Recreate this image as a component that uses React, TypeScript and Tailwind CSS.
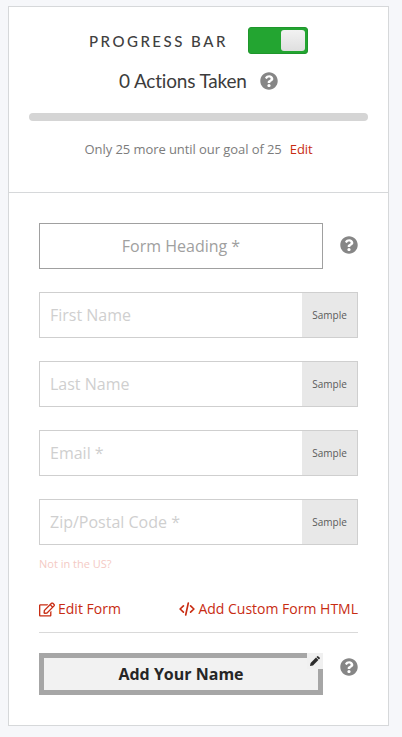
import { useState } from 'react';
import { FaQuestionCircle, FaRegEdit } from 'react-icons/fa';

interface SampleField {
  name: string;
  placeholder: string;
}

const FIELDS: SampleField[] = [
  { name: 'first_name', placeholder: 'First Name' },
  { name: 'last_name', placeholder: 'Last Name' },
  { name: 'email', placeholder: 'Email *' },
  { name: 'zip', placeholder: 'Zip/Postal Code *' },
];

function HelpIcon() {
  return <FaQuestionCircle className="h-[18px] w-[18px] shrink-0 text-[#868686]" />;
}

function CodeIcon() {
  return (
    <svg
      viewBox="0 0 16 14"
      className="h-[14px] w-4"
      fill="none"
      stroke="currentColor"
      strokeWidth="1.65"
      strokeLinecap="round"
      strokeLinejoin="round"
    >
      <path d="M4.4 3.9 1.1 7l3.3 3.1M11.6 3.9 14.9 7l-3.3 3.1M9.3 1 6.7 13" />
    </svg>
  );
}

function PencilIcon() {
  return (
    <svg viewBox="0 0 10 10" className="h-[10px] w-[10px]" fill="#2c2c2c">
      <path d="M0 10 .6 7 6 1.6 8.4 4 3 9.4Z" />
      <path d="M6.5 1.1 7.3.3Q7.8-.1 8.4.4L9.6 1.6Q10.1 2.2 9.7 2.7L8.9 3.5Z" />
    </svg>
  );
}

export default function App() {
  const [showProgress, setShowProgress] = useState(true);

  return (
    <div className="h-[737px] w-[402px] overflow-hidden bg-[#f6f7fa] pt-[6px] pl-2 font-['Open_Sans',sans-serif]">
      <div className="h-[720px] w-[381px] border border-[#d6d8da] bg-white">
        {/* Progress bar settings */}
        <div className="h-[186px] border-b border-[#d6d8da] px-5 pt-5">
          <div className="flex h-[27px] items-center pl-[60px]">
            <h2 className="w-[159px] pt-[2px] font-['Lato',sans-serif] text-[15px] leading-[27px] font-medium tracking-[2.5px] whitespace-nowrap text-[#404040]">
              PROGRESS BAR
            </h2>
            <button
              onClick={() => setShowProgress(!showProgress)}
              className={`flex h-[27px] w-[60px] items-center rounded-[3px] border px-[2px] ${showProgress ? 'justify-end border-[#1f962c] bg-[#23a531]' : 'border-gray-400 bg-gray-300'}`}
            >
              <span className="h-[21px] w-6 rounded-[3px] bg-linear-to-b from-[#f2f2f2] to-[#dfdfdf]" />
            </button>
          </div>

          <div className="mt-[13px] flex h-[27px] items-center pl-[90px]">
            <span className="w-[141px] pt-[2px] font-['Lato',sans-serif] text-[19px] tracking-[-0.18px] whitespace-nowrap text-[#3c3c3c] [font-variant-ligatures:none]">
              0 Actions Taken
            </span>
            <HelpIcon />
          </div>

          <div className="mt-[19px] h-2 rounded-full bg-[#d5d5d5]" />

          <p className="mt-[18px] pl-[55.5px] text-[13px] leading-5 tracking-[-0.07px] whitespace-nowrap text-[#7c7c7c]">
            Only 25 more until our goal of 25
            <a className="ml-2 text-[#c82c12]">Edit</a>
          </p>
        </div>

        {/* Form preview */}
        <div className="px-[30px] pt-[30px]">
          <div className="flex items-start justify-between">
            <input
              placeholder="Form Heading *"
              className="h-[46px] w-[284px] border border-[#a0a0a0] text-center text-base placeholder:text-[#a0a0a0]"
            />
            <div className="pt-[13px]">
              <HelpIcon />
            </div>
          </div>

          <div className="mt-[23px] flex flex-col gap-[23px]">
            {FIELDS.map((field) => (
              <div key={field.name} className="flex h-[46px] border border-[#cfcfcf]">
                <input
                  placeholder={field.placeholder}
                  className="min-w-0 flex-1 pl-[10px] text-base placeholder:text-[#cfcfcf]"
                />
                <span className="flex w-[55px] items-center justify-center bg-[#e8e8e8] text-[10px] text-[#5a5a5a]">
                  Sample
                </span>
              </div>
            ))}
          </div>

          <p className="mt-[11px] text-[11px] leading-4 text-[#f4cac4]">Not in the US?</p>

          <div className="mt-[27px] flex h-5 items-center justify-between text-sm leading-5 text-[#c82c12]">
            <a className="flex items-center gap-[3px]">
              <FaRegEdit className="h-[15px] w-4" />
              Edit Form
            </a>
            <a className="flex items-center gap-[3px]">
              <CodeIcon />
              Add Custom Form HTML
            </a>
          </div>

          <hr className="mt-[13px] border-[#d9d9d9]" />

          <div className="mt-5 flex items-start justify-between">
            <div className="relative">
              <button className="h-[42px] w-[284px] border-5 border-[#a6a6a6] bg-[#f2f2f2] text-base leading-8 font-bold text-[#262626]">
                Add Your Name
              </button>
              <span className="absolute top-0 right-0 flex h-4 w-4 items-center justify-center bg-[#f0f0f0]">
                <PencilIcon />
              </span>
            </div>
            <div className="pt-[5px]">
              <HelpIcon />
            </div>
          </div>
        </div>
      </div>
    </div>
  );
}
